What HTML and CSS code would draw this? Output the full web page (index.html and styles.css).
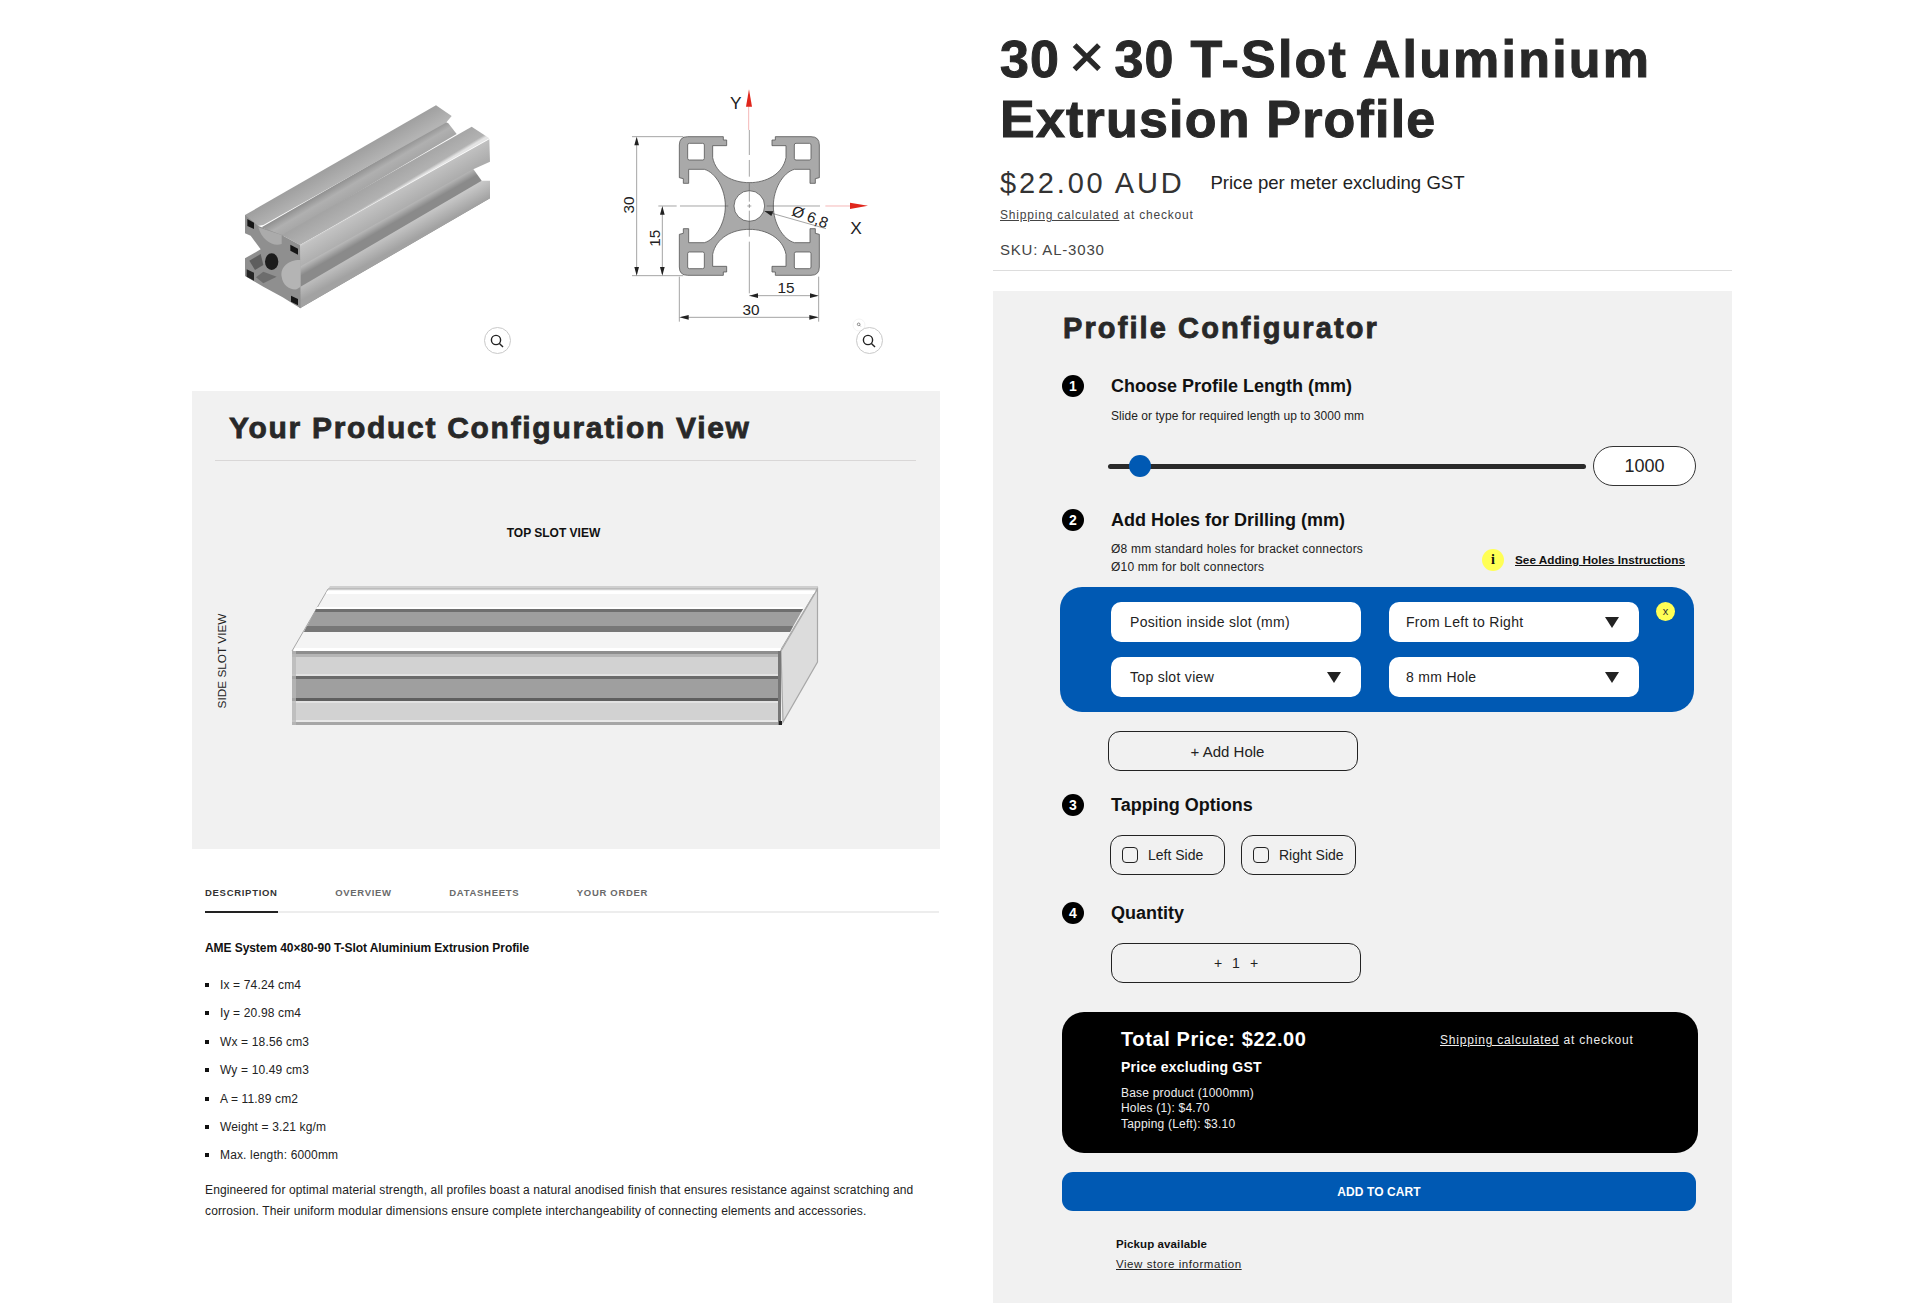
FILE: index.html
```html
<!DOCTYPE html>
<html lang="en">
<head>
<meta charset="utf-8">
<title>30×30 T-Slot Aluminium Extrusion Profile</title>
<link rel="stylesheet" href="styles.css">
</head>
<body>
<main class="page">
  <section class="left">
    <div class="gallery">
      <div class="media">
        <svg class="media-art" viewBox="192 0 372 391" aria-hidden="true">
          <defs>
            <linearGradient id="gTop" gradientUnits="userSpaceOnUse" x1="340" y1="190" x2="375" y2="250"><stop offset="0" stop-color="#9a9a9a"/><stop offset="1" stop-color="#b4b4b4"/></linearGradient>
            <linearGradient id="gSlot" gradientUnits="userSpaceOnUse" x1="355" y1="250" x2="390" y2="310"><stop offset="0" stop-color="#4f4f4f"/><stop offset=".12" stop-color="#8e8e8e"/><stop offset=".5" stop-color="#b0b0b0"/><stop offset="1" stop-color="#a4a4a4"/></linearGradient>
            <linearGradient id="gFl2" gradientUnits="userSpaceOnUse" x1="440" y1="270" x2="470" y2="320"><stop offset="0" stop-color="#a4a4a4"/><stop offset=".85" stop-color="#b2b2b2"/><stop offset="1" stop-color="#e4e4e4"/></linearGradient>
            <linearGradient id="gSide" gradientUnits="userSpaceOnUse" x1="470" y1="305" x2="505" y2="365"><stop offset="0" stop-color="#dedede"/><stop offset=".2" stop-color="#c2c2c2"/><stop offset="1" stop-color="#adadad"/></linearGradient>
            <linearGradient id="gSlot2" gradientUnits="userSpaceOnUse" x1="440" y1="335" x2="480" y2="405"><stop offset="0" stop-color="#8d8d8d"/><stop offset=".5" stop-color="#d8d8d8"/><stop offset="1" stop-color="#8a8a8a"/></linearGradient>
            <linearGradient id="gLow" gradientUnits="userSpaceOnUse" x1="470" y1="420" x2="500" y2="475"><stop offset="0" stop-color="#cfcfcf"/><stop offset="1" stop-color="#a2a2a2"/></linearGradient>
          </defs>
          <g transform="translate(230 90) scale(.33333)">
            <polygon points="95,412 645,95 655,100 680,132 155,440" fill="url(#gSlot)"/>
            <polygon points="45,375 618,46 665,78 648,98 100,405 82,408 45,378" fill="url(#gTop)"/>
            <polygon points="210,525 725,230 755,272 780,325 210,655 195,600" fill="url(#gSlot2)"/>
            <polygon points="155,435 725,110 778,145 210,465" fill="url(#gFl2)"/>
            <polygon points="210,465 778,148 780,215 725,240 210,530" fill="url(#gSide)"/>
            <polygon points="195,600 755,272 780,272 780,325 210,655 195,640" fill="url(#gLow)"/>
            <path d="M45 375L85 408L155 435L210 465L212 655L195 645L158 622L100 590L45 558V505L92 478L62 437L45 430Z" fill="#8f8f8f"/>
            <path d="M85 412C95 450 130 472 155 462V435Z" fill="#ababab"/>
            <path d="M212 510C178 508 150 530 155 560C158 585 178 600 200 598L212 590Z" fill="#b4b4b4"/>
            <polygon points="52,387 72,398 72,417 52,408" fill="#161616"/>
            <polygon points="181,464 204,476 204,494 181,482" fill="#161616"/>
            <polygon points="183,617 204,627 204,646 183,635" fill="#161616"/>
            <polygon points="50,538 72,548 72,572 50,560" fill="#262626"/>
            <polygon points="58,512 92,492 100,525 75,540" fill="#5e5e5e"/>
            <polygon points="100,545 140,560 100,580 78,562" fill="#6d6d6d"/>
            <ellipse cx="125" cy="515" rx="20" ry="25" fill="#1c1c1c"/>
          </g>
        </svg>
        <button class="zoom-btn" type="button" aria-label="Zoom">
          <svg viewBox="0 0 16 16"><circle cx="7" cy="7" r="4.6"/><path d="M10.4 10.4 14 14"/></svg>
        </button>
      </div>
      <div class="media">
        <svg class="media-art" viewBox="564 0 372 391" aria-hidden="true">
          <defs>
            <g id="quad">
              <path class="q-fill" d="M0-70C-50-70-100-95-110-145V-181H-68V-198H-78V-208H-185Q-210-208-210-183V-85L-198-82V-68H-182V-110H-135C-100-100-72-50-72 0"/>
            </g>
            <g id="quadLine">
              <path class="q-line" d="M0-70C-50-70-100-95-110-145V-181H-68V-198H-78V-208H-185Q-210-208-210-183V-85L-198-82V-68H-182V-110H-135C-100-100-72-50-72 0"/>
              <rect class="q-hole" x="-185" y="-188" width="50" height="50" rx="5"/>
            </g>
          </defs>
          <g transform="translate(600 80) scale(.33333)">
            <g transform="translate(448 378)">
              <use href="#quad"/>
              <use href="#quad" transform="scale(-1 1)"/>
              <use href="#quad" transform="scale(1 -1)"/>
              <use href="#quad" transform="scale(-1 -1)"/>
              <polygon points="0,-72 74,0 0,72 -74,0" class="q-core"/>
              <use href="#quadLine"/>
              <use href="#quadLine" transform="scale(-1 1)"/>
              <use href="#quadLine" transform="scale(1 -1)"/>
              <use href="#quadLine" transform="scale(-1 -1)"/>
              <circle class="q-hole" r="46"/>
            </g>
            <path class="dim" d="M448 150V225M448 240V290M448 310V365M448 392V470M448 485V640M175 378H230M240 378H385M500 378H660M96 170H250M96 587H250M110 175V582M187 384V582M238 590V725M656 590V725M448 647H652M245 712H652M442 378H454M448 372V384M495 394L678 446"/>
            <path class="dim-red" d="M446 60V150M676 378H750"/>
            <polygon class="arrow-red" points="447,28 438,80 456,80"/>
            <polygon class="arrow-red" points="804,377 750,368 750,387"/>
            <polygon class="arrow" points="110,170 103,196 117,196"/>
            <polygon class="arrow" points="110,587 103,561 117,561"/>
            <polygon class="arrow" points="187,378 180,404 194,404"/>
            <polygon class="arrow" points="187,587 180,561 194,561"/>
            <polygon class="arrow" points="448,647 474,640 474,654"/>
            <polygon class="arrow" points="656,647 630,640 630,654"/>
            <polygon class="arrow" points="238,712 266,705 266,719"/>
            <polygon class="arrow" points="656,712 628,705 628,719"/>
            <polygon class="arrow" points="493,393 520,394 514,408"/>
            <text class="dim-text dim-axis" x="407" y="88" text-anchor="middle">Y</text>
            <text class="dim-text dim-axis" x="768" y="461" text-anchor="middle">X</text>
            <text class="dim-text" transform="translate(102 375) rotate(-90)" text-anchor="middle">30</text>
            <text class="dim-text" transform="translate(179 475) rotate(-90)" text-anchor="middle">15</text>
            <text class="dim-text" x="558" y="639" text-anchor="middle">15</text>
            <text class="dim-text" x="453" y="705" text-anchor="middle">30</text>
            <text class="dim-text" transform="translate(572 405) rotate(21)">Ø 6,8</text>
            <circle class="mini-ring" cx="777" cy="735" r="18"/>
            <circle class="mini-lens" cx="776" cy="733" r="4"/>
            <path class="mini-lens" d="M779 736l3 3"/>
          </g>
        </svg>
        <button class="zoom-btn" type="button" aria-label="Zoom">
          <svg viewBox="0 0 16 16"><circle cx="7" cy="7" r="4.6"/><path d="M10.4 10.4 14 14"/></svg>
        </button>
      </div>
    </div>

    <div class="view-panel">
      <h2 class="view-title">Your Product Configuration View</h2>
      <hr class="view-rule">
      <svg class="view-art" viewBox="192 462 748 387" role="img" aria-label="Profile configuration preview">
        <text class="label-bold" x="553.5" y="538" text-anchor="middle">TOP SLOT VIEW</text>
        <text class="label-side" transform="translate(226 662) rotate(-90)" text-anchor="middle">SIDE SLOT VIEW</text>
        <polygon points="330,587 818,587 818,590 328,590" fill="#cfcfcf"/>
        <polygon points="328,590 817,590 780,652 292,652" fill="#f4f4f4" stroke="#a8a8a8" stroke-width="1"/>
        <polygon points="327,592 816,592 814,595 326,595" fill="#fff"/>
        <polygon points="317,608 803,608 802,610 316,610" fill="#fff"/>
        <polygon points="316,610 803,610 790,633 304,633" fill="#9e9e9e"/>
        <polygon points="316,610 803,610 801,613 315,613" fill="#6e6e6e"/>
        <polygon points="307,627 793,627 790,633 304,633" fill="#777"/>
        <polygon points="295,649 781,649 780,652 293,652" fill="#fff"/>
        <polygon points="781,652 817.5,590 817.5,663 783,723" fill="#dcdcdc" stroke="#a8a8a8" stroke-width="1.2"/>
        <rect x="292" y="652" width="489" height="74" fill="#d2d2d2"/>
        <rect x="292" y="652" width="489" height="3" fill="#8e8e8e"/>
        <rect x="292" y="655" width="489" height="3" fill="#b5b5b5"/>
        <rect x="292" y="675" width="489" height="3" fill="#e2e2e2"/>
        <rect x="292" y="678" width="489" height="22" fill="#9f9f9f"/>
        <rect x="292" y="677" width="489" height="3" fill="#6a6a6a"/>
        <rect x="292" y="699" width="489" height="3" fill="#5f5f5f"/>
        <rect x="292" y="702" width="489" height="2" fill="#e2e2e2"/>
        <rect x="292" y="721" width="489" height="2" fill="#e8e8e8"/>
        <rect x="292" y="723" width="489" height="3" fill="#a6a6a6"/>
        <rect x="292" y="652" width="4" height="74" fill="#b8b8b8" fill-opacity=".75"/>
        <rect x="778" y="652" width="3" height="74" fill="#777"/>
        <rect x="779" y="722" width="3" height="4" fill="#222"/>
      </svg>
    </div>

    <nav class="tabs">
      <a class="tab is-active" href="#description">DESCRIPTION</a>
      <a class="tab" href="#overview">OVERVIEW</a>
      <a class="tab" href="#datasheets">DATASHEETS</a>
      <a class="tab" href="#order">YOUR ORDER</a>
    </nav>
    <div class="desc" id="description">
      <h3 class="desc-title">AME System 40×80-90 T-Slot Aluminium Extrusion Profile</h3>
      <ul class="specs">
        <li>Ix = 74.24 cm4</li>
        <li>Iy = 20.98 cm4</li>
        <li>Wx = 18.56 cm3</li>
        <li>Wy = 10.49 cm3</li>
        <li>A = 11.89 cm2</li>
        <li>Weight = 3.21 kg/m</li>
        <li>Max. length: 6000mm</li>
      </ul>
      <p class="desc-text">Engineered for optimal material strength, all profiles boast a natural anodised finish that ensures resistance against scratching and corrosion. Their uniform modular dimensions ensure complete interchangeability of connecting elements and accessories.</p>
    </div>
  </section>

  <section class="right">
    <header class="product-head">
      <h1 class="product-title">30<span class="times">×</span>30 <span class="title-wide">T-Slot Aluminium</span><br>Extrusion Profile</h1>
      <div class="price-row">
        <span class="price">$22.00 AUD</span>
        <span class="price-note">Price per meter excluding GST</span>
      </div>
      <p class="ship"><a href="#shipping">Shipping calculated</a> at checkout</p>
      <p class="sku">SKU: AL-3030</p>
    </header>
    <hr class="head-rule">

    <div class="config">
      <h2 class="config-title">Profile Configurator</h2>

      <div class="step step-1"><span class="num">1</span><h3>Choose Profile Length (mm)</h3></div>
      <p class="hint hint-1">Slide or type for required length up to 3000 mm</p>
      <div class="slider-row">
        <div class="track"><span class="thumb"></span></div>
        <div class="len-input">1000</div>
      </div>

      <div class="step step-2"><span class="num">2</span><h3>Add Holes for Drilling (mm)</h3></div>
      <div class="hole-info">
        <p class="hint hint-2">Ø8 mm standard holes for bracket connectors<br>Ø10 mm for bolt connectors</p>
        <div class="instr"><span class="info-dot">i</span><a href="#instructions">See Adding Holes Instructions</a></div>
      </div>

      <div class="hole-card">
        <div class="field">Position inside slot (mm)</div>
        <div class="field field-select">From Left to Right<span class="caret"></span></div>
        <div class="field field-select">Top slot view<span class="caret"></span></div>
        <div class="field field-select">8 mm Hole<span class="caret"></span></div>
        <button class="remove" type="button">x</button>
      </div>

      <button class="outline add-hole" type="button">+ Add Hole</button>

      <div class="step step-3"><span class="num">3</span><h3>Tapping Options</h3></div>
      <div class="checks">
        <label class="check"><span class="box"></span>Left Side</label>
        <label class="check"><span class="box"></span>Right Side</label>
      </div>

      <div class="step step-4"><span class="num">4</span><h3>Quantity</h3></div>
      <div class="outline qty"><span>+</span><span>1</span><span>+</span></div>

      <div class="total">
        <div class="total-main">
          <div class="total-price">Total Price: $22.00</div>
          <div class="total-sub">Price excluding GST</div>
          <div class="total-lines">Base product (1000mm)<br>Holes (1): $4.70<br>Tapping (Left): $3.10</div>
        </div>
        <p class="total-ship"><a href="#shipping">Shipping calculated</a> at checkout</p>
      </div>

      <button class="cart" type="button">ADD TO CART</button>

      <div class="pickup">
        <div class="pickup-title">Pickup available</div>
        <a class="pickup-link" href="#store">View store information</a>
      </div>
    </div>
  </section>
</main>
</body>
</html>
```
FILE: styles.css
```css
* { box-sizing: border-box; }
html, body { margin: 0; padding: 0; background: #fff; }
body { font-family: "Liberation Sans", Arial, sans-serif; color: #222; }
h1, h2, h3, p, ul { margin: 0; padding: 0; }
a { color: inherit; }
button { font-family: inherit; }

.page { display: flex; align-items: flex-start; padding-left: 192px; }
.left { width: 748px; flex: none; }
.right { width: 739px; flex: none; margin-left: 53px; }

/* gallery */
.gallery { display: grid; grid-template-columns: 372px 372px; height: 391px; }
.media { position: relative; height: 391px; }
.media-art { display: block; width: 372px; height: 391px; }
.zoom-btn { position: absolute; top: 327px; right: 53.5px; width: 27px; height: 27px; padding: 0; border: 1px solid #c9c9c9; border-radius: 50%; background: #fff; display: flex; align-items: center; justify-content: center; }
.zoom-btn svg { width: 16px; height: 16px; fill: none; stroke: #222; stroke-width: 1.4; }

.q-fill, .q-core { fill: #a9a9a9; stroke: none; }
.q-line { fill: none; stroke: #555; stroke-width: 2.4; }
.q-hole { fill: #fff; stroke: #555; stroke-width: 2.4; }
.dim { fill: none; stroke: #555; stroke-width: 1.6; }
.dim-red { fill: none; stroke: #e88; stroke-width: 1.8; }
.arrow-red { fill: #e0261c; }
.arrow { fill: #222; }
.dim-text { font-family: "Liberation Sans", Arial, sans-serif; font-size: 46px; fill: #222; }
.dim-axis { font-size: 52px; }
.mini-ring { fill: #fff; stroke: #ddd; stroke-width: 1; }
.mini-lens { fill: none; stroke: #333; stroke-width: 1.6; }

/* view panel */
.view-panel { background: #f1f1f1; height: 458px; padding-top: 20px; }
.view-title { margin-left: 37px; font-size: 30px; line-height: 34px; font-weight: 700; color: #282828; letter-spacing: 1.7px; -webkit-text-stroke: .8px #282828; }
.view-rule { margin: 15px 24px 0 23px; border: 0; border-top: 1px solid #d9d7d7; height: 1px; }
.view-art { display: block; width: 748px; height: 387px; }
.label-bold { font-size: 12px; font-weight: 700; fill: #111; }
.label-side { font-size: 11.8px; fill: #222; }

/* tabs */
.tabs { display: flex; gap: 57.5px; margin: 36px 1px 0 13px; border-bottom: 2px solid #ededed; height: 28px; }
.tab { display: block; font-size: 9.5px; line-height: 16px; height: 28px; font-weight: 700; letter-spacing: .7px; color: #6a6a6a; text-decoration: none; white-space: nowrap; }
.tab.is-active { color: #333; border-bottom: 2px solid #222; }

.desc { padding-left: 13px; }
.desc-title { margin-top: 27px; font-size: 12px; line-height: 16px; font-weight: 700; letter-spacing: -.07px; color: #111; }
.specs { list-style: none; margin-top: 21px; display: flex; flex-direction: column; gap: 12.4px; }
.specs li { position: relative; padding-left: 15px; font-size: 12px; line-height: 16px; letter-spacing: .15px; color: #222; }
.specs li::before { content: ""; position: absolute; left: 0; top: 6px; width: 4px; height: 4px; background: #111; }
.desc-text { margin-top: 17px; width: 730px; font-size: 12px; line-height: 21px; letter-spacing: .13px; color: #222; }

/* product head */
.product-head { padding-left: 7px; }
.product-title { padding-top: 29px; font-size: 52px; line-height: 60px; font-weight: 700; color: #282828; letter-spacing: 1.2px; -webkit-text-stroke: 1px #282828; }
.times { margin: 0 9px; font-size: 60px; line-height: 0; font-weight: 400; }
.title-wide { letter-spacing: 2.2px; }
.price-row { display: flex; align-items: center; gap: 26px; margin-top: 18px; height: 32px; }
.price { font-size: 29px; letter-spacing: 2.8px; color: #333; }
.price-note { font-size: 18.6px; color: #222; }
.ship { margin-top: 7px; font-size: 12px; line-height: 18px; letter-spacing: .8px; color: #444; }
.sku { margin-top: 17px; font-size: 15px; line-height: 18px; letter-spacing: .8px; color: #444; }
.head-rule { margin: 11px 0 0; border: 0; border-top: 1px solid #ddd; height: 1px; }

/* configurator */
.config { margin-top: 20px; background: #f1f1f1; padding: 20px 0 29px 69px; min-height: 1012px; }
.config-title { margin-left: 1px; font-size: 29px; line-height: 34px; font-weight: 700; color: #282828; letter-spacing: 2.1px; -webkit-text-stroke: .8px #282828; }
.step { display: flex; align-items: center; gap: 27px; height: 24px; }
.step h3 { font-size: 18px; line-height: 24px; font-weight: 700; color: #111; }
.num { width: 22px; height: 22px; flex: none; border-radius: 50%; background: #000; color: #fff; font-size: 14px; font-weight: 700; line-height: 22px; text-align: center; }
.step-1 { margin-top: 29px; }
.step-2 { margin-top: 22px; }
.step-3 { margin-top: 22px; }
.step-4 { margin-top: 26px; }
.hint { margin-left: 49px; font-size: 12px; line-height: 18px; color: #222; }
.hint-1 { margin-top: 9px; letter-spacing: .05px; }
.hint-2 { letter-spacing: .2px; }

.slider-row { display: flex; align-items: center; gap: 7px; margin: 21px 0 0 46px; height: 40px; width: 588px; }
.track { position: relative; flex: none; width: 478px; height: 5px; border-radius: 3px; background: #2a2a2a; }
.thumb { position: absolute; left: 20.5px; top: -8.5px; width: 22px; height: 22px; border-radius: 50%; background: #0059b3; }
.len-input { flex: none; width: 103px; height: 40px; border: 1px solid #333; border-radius: 20px; background: #fff; font-size: 18px; line-height: 38px; text-align: center; color: #222; }

.hole-info { display: flex; justify-content: space-between; align-items: center; width: 623px; margin-top: 8px; }
.instr { display: flex; align-items: center; gap: 11px; padding-top: 3px; font-size: 11.75px; font-weight: 700; color: #111; }
.info-dot { width: 22px; height: 22px; border-radius: 50%; background: #ffff55; font-family: "Liberation Serif", serif; font-size: 14px; font-weight: 700; line-height: 22px; text-align: center; color: #111; }

.hole-card { position: relative; display: grid; grid-template-columns: 250px 250px; gap: 15px 28px; width: 634px; height: 125px; margin: 11px 0 0 -2px; padding: 15px 0 15px 51px; border-radius: 22px; background: #0059b3; }
.field { position: relative; height: 40px; padding-left: 19px; border-radius: 10px; background: #fff; font-size: 14px; line-height: 40px; letter-spacing: .3px; color: #222; }
.field-select { padding-left: 17px; }
.field-select:nth-child(3) { padding-left: 19px; }
.caret { position: absolute; right: 20px; top: 15px; width: 0; height: 0; border-left: 7.5px solid transparent; border-right: 7.5px solid transparent; border-top: 11px solid #222; }
.remove { position: absolute; right: 19px; top: 15px; width: 19px; height: 19px; padding: 0; border: 0; border-radius: 50%; background: #ffff55; font-size: 11px; line-height: 19px; color: #333; }

.outline { border: 1px solid #222; border-radius: 12px; background: transparent; height: 40px; font-size: 14px; color: #222; }
.add-hole { display: block; width: 250px; margin: 19px 0 0 46px; padding: 0 11px 0 0; font-size: 15px; }
.checks { display: flex; gap: 16px; margin: 18px 0 0 48px; }
.check { display: flex; align-items: center; gap: 10px; width: 115px; height: 40px; padding-left: 11px; border: 1px solid #222; border-radius: 12px; font-size: 14px; color: #222; }
.box { width: 16px; height: 16px; flex: none; border: 1px solid #222; border-radius: 4px; }
.qty { display: flex; justify-content: center; align-items: center; gap: 10px; width: 250px; margin: 18px 0 0 49px; }

.total { display: flex; align-items: flex-start; width: 636px; height: 141px; margin-top: 29px; padding: 15px 0 0 59px; border-radius: 22px; background: #000; color: #fff; }
.total-main { width: 319px; flex: none; }
.total-price { font-size: 20px; line-height: 24px; font-weight: 700; letter-spacing: .6px; }
.total-sub { margin-top: 7px; font-size: 14px; line-height: 18px; font-weight: 700; letter-spacing: .25px; }
.total-lines { margin-top: 10px; font-size: 12px; line-height: 15.3px; letter-spacing: .2px; color: #eee; }
.total-ship { margin-top: 4px; font-size: 12px; line-height: 18px; letter-spacing: .8px; color: #eee; }

.cart { display: block; width: 634px; height: 39px; margin-top: 19px; border: 0; border-radius: 11px; background: #0059b3; color: #fff; font-size: 12px; font-weight: 700; letter-spacing: .1px; }

.pickup { margin: 23px 0 0 54px; font-size: 11.5px; line-height: 20px; color: #222; }
.pickup-title { font-weight: 700; color: #111; letter-spacing: .1px; }
.pickup-link { letter-spacing: .55px; }
```
